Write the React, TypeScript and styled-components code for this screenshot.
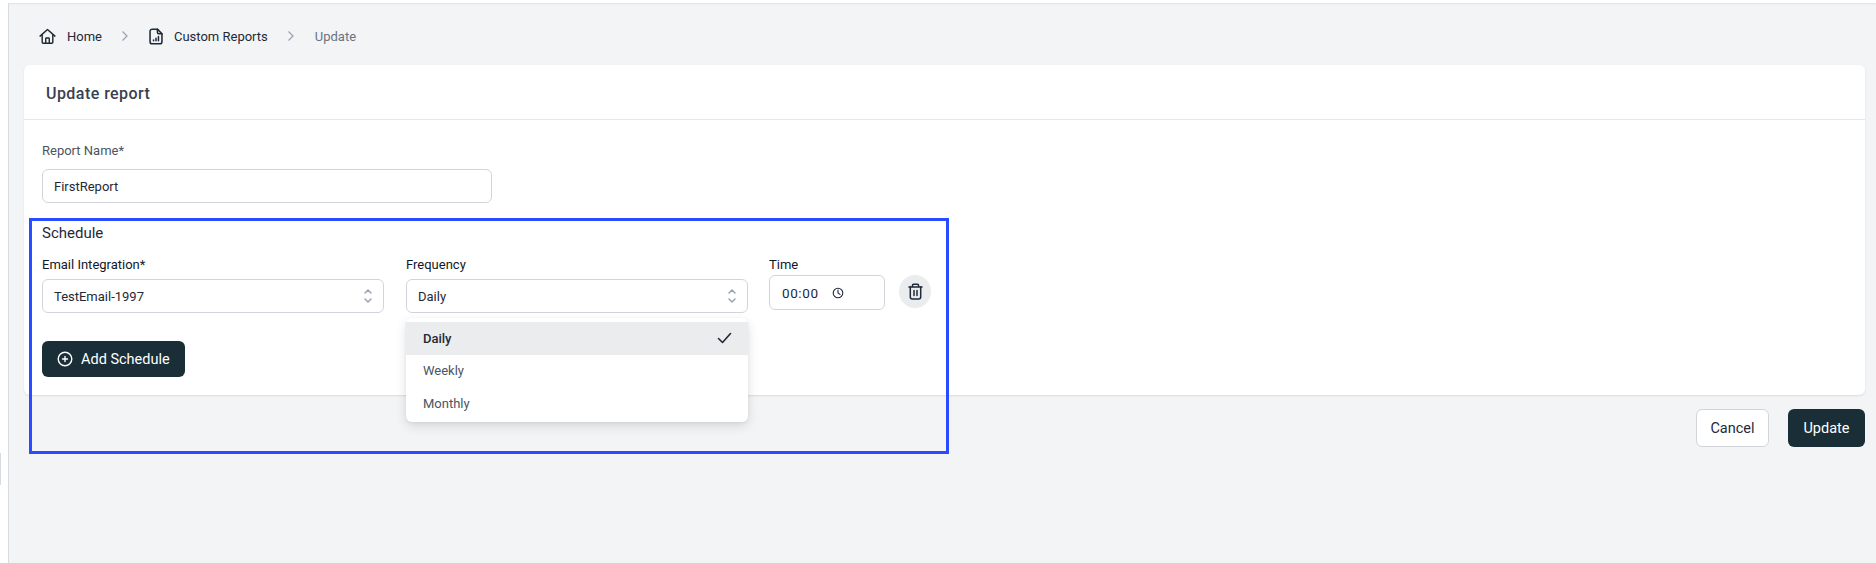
import React from "react";
import styled, { createGlobalStyle } from "styled-components";

const Global = createGlobalStyle`
  html, body { margin: 0; padding: 0; background: #f3f4f6; }
  body { font-family: Roboto, "Noto Sans", sans-serif; overflow: hidden; }
  * { box-sizing: border-box; }
`;

const Page = styled.div`
  width: 1876px;
  height: 563px;
  display: flex;
  flex-direction: column;
  background: #f3f4f6;
  overflow: hidden;
`;
const TopBar = styled.div`
  height: 3px;
  flex: none;
  background: #fff;
  box-shadow: 0 1px 2px rgba(0, 0, 0, 0.08);
`;
const Body = styled.div`
  flex: 1;
  display: flex;
  min-height: 0;
`;
const Rail = styled.div`
  width: 9px;
  flex: none;
  background: #fff;
  border-right: 1px solid #d9dbe0;
  position: relative;
`;
const RailTab = styled.div`
  position: absolute;
  left: 0;
  top: 450px;
  width: 1px;
  height: 32px;
  background: #d9dbe0;
`;
const Main = styled.main`
  flex: 1;
  min-width: 0;
  padding: 0 11px 0 15px;
  position: relative;
`;
const Crumbs = styled.nav`
  height: 62px;
  display: flex;
  align-items: center;
  padding: 4px 0 0 15px;
  font-size: 13px;
  color: #1f2937;
`;
const Crumb = styled.span<{ $muted?: boolean }>`
  display: inline-flex;
  align-items: center;
  gap: 11px;
  color: ${(p) => (p.$muted ? "#6b7280" : "#1f2937")};
`;
const Sep = styled.span`
  display: inline-flex;
  margin: 0 19.5px;
  color: #9ca3af;
`;
const Card = styled.section`
  height: 330px;
  background: #fff;
  border-radius: 6px;
  box-shadow: 0 1px 2px rgba(0, 0, 0, 0.1);
`;
const CardHead = styled.header`
  height: 55px;
  display: flex;
  align-items: center;
  padding: 3px 0 0 22px;
  border-bottom: 1px solid #e5e7eb;
  font-size: 16px;
  font-weight: 500;
  letter-spacing: 0.45px;
  color: #374151;
`;
const CardBody = styled.div`
  padding: 20px 18px 0;
`;
const Label = styled.div<{ $strong?: boolean }>`
  font-size: 13px;
  line-height: 20px;
  padding-top: 1px;
  color: ${(p) => (p.$strong ? "#111827" : "#4b5563")};
`;
const Field = styled.div<{ $w: number; $h?: number }>`
  width: ${(p) => p.$w}px;
  height: ${(p) => p.$h ?? 34}px;
  background: #fff;
  border: 1px solid #d1d5db;
  border-radius: 6px;
  display: flex;
  align-items: center;
  justify-content: space-between;
  padding: 0 10px 0 11px;
  font-size: 13px;
  color: #1f2937;
`;
const NameField = styled(Field)`
  margin-top: 8px;
`;
const Heading = styled.div`
  margin-top: 20px;
  font-size: 15px;
  line-height: 20px;
  color: #1f2937;
`;
const Row = styled.div`
  display: flex;
  margin-top: 11px;
  height: 85px;
`;
const Col = styled.div<{ $w: number }>`
  width: ${(p) => p.$w}px;
  flex: none;
  position: relative;
`;
const SelectField = styled(Field)`
  margin-top: 4px;
`;
const TimeField = styled(Field)`
  justify-content: flex-start;
  gap: 13px;
  padding-left: 12px;
  font-size: 13.5px;
  letter-spacing: 0.6px;
`;
const TrashBtn = styled.button`
  width: 32px;
  height: 33px;
  margin: 21px 0 0 14px;
  padding: 0;
  border: 0;
  border-radius: 50%;
  background: #ebecee;
  display: flex;
  align-items: center;
  justify-content: center;
  color: #1f2937;
`;
const Menu = styled.ul`
  position: absolute;
  top: 64px;
  left: 0;
  width: 342px;
  margin: 0;
  padding: 4px 0 2px;
  list-style: none;
  background: #fff;
  border-radius: 6px;
  box-shadow: 0 4px 12px rgba(0, 0, 0, 0.12), 0 1px 3px rgba(0, 0, 0, 0.06);
  z-index: 2;
`;
const Option = styled.li<{ $active?: boolean }>`
  height: 32.5px;
  display: flex;
  align-items: center;
  justify-content: space-between;
  padding: 0 16px 0 17px;
  font-size: 13px;
  font-weight: ${(p) => (p.$active ? 500 : 400)};
  color: ${(p) => (p.$active ? "#1f2937" : "#4b5563")};
  background: ${(p) => (p.$active ? "#ebecee" : "transparent")};
`;
const Primary = styled.button`
  height: 36px;
  display: inline-flex;
  align-items: center;
  gap: 8px;
  padding: 0 15px;
  border: 0;
  border-radius: 6px;
  background: #1a2e38;
  color: #fff;
  font: inherit;
  font-size: 14.5px;
`;
const AddBtn = styled(Primary)`
  margin-top: 2px;
  width: 143px;
`;
const Actions = styled.div`
  display: flex;
  justify-content: flex-end;
  gap: 19px;
  margin-top: 14px;
`;
const Cancel = styled.button`
  width: 73px;
  height: 38px;
  background: #fff;
  border: 1px solid #d1d5db;
  border-radius: 6px;
  font: inherit;
  font-size: 14.5px;
  color: #1f2937;
`;
const Update = styled(Primary)`
  width: 77px;
  height: 38px;
  justify-content: center;
  padding: 0;
`;
const Highlight = styled.div`
  position: absolute;
  left: 20px;
  top: 215px;
  width: 920px;
  height: 236px;
  border: 3px solid #2a4bff;
  pointer-events: none;
  z-index: 3;
`;

const Chevron = () => (
  <svg width="8" height="12" viewBox="0 0 8 12" fill="none" stroke="currentColor" strokeWidth="1.3">
    <path d="M1.5 1.5 6 6l-4.5 4.5" />
  </svg>
);
const Home = () => (
  <svg width="17" height="17" viewBox="0 0 24 24" fill="none" stroke="#1f2937" strokeWidth="2" strokeLinecap="round" strokeLinejoin="round">
    <path d="M1.5 11.5 12 2l10.5 9.5" />
    <path d="M4.5 9.5V20a1.5 1.5 0 0 0 1.5 1.5h12a1.5 1.5 0 0 0 1.5-1.5V9.5" />
    <path d="M9.5 21.5V15a1 1 0 0 1 1-1h3a1 1 0 0 1 1 1v6.5" />
  </svg>
);
const Doc = () => (
  <svg width="14" height="17" viewBox="0 0 20 24" fill="none" stroke="#1f2937" strokeWidth="2.2" strokeLinecap="round" strokeLinejoin="round">
    <path d="M12 1.5H4.5a3 3 0 0 0-3 3v15a3 3 0 0 0 3 3h11a3 3 0 0 0 3-3V8z" />
    <path d="M12 1.5V6a2 2 0 0 0 2 2h4.5" />
    <path d="M6.5 18v-1M10 18v-3.5M13.5 18v-6" />
  </svg>
);
const Updown = () => (
  <svg width="10" height="16" viewBox="0 0 10 16" fill="none" stroke="#9ca3af" strokeWidth="1.5" strokeLinecap="round" strokeLinejoin="round">
    <path d="M2 5 5 2l3 3M2 11l3 3 3-3" />
  </svg>
);
const Clock = () => (
  <svg width="12" height="12" viewBox="0 0 12 12" fill="none" stroke="#1f2937" strokeWidth="1.1" strokeLinecap="round">
    <circle cx="6" cy="6" r="4.8" />
    <path d="M6 3v3l2 1.4" />
  </svg>
);
const Trash = () => (
  <svg width="15" height="17" viewBox="0 0 15 17" fill="none" stroke="#1f2937" strokeWidth="1.5" strokeLinecap="round" strokeLinejoin="round">
    <path d="M1 4h13M4.5 4V2.3a1 1 0 0 1 1-1h4a1 1 0 0 1 1 1V4" />
    <path d="M2.3 4v10a2 2 0 0 0 2 2h6.4a2 2 0 0 0 2-2V4" />
    <path d="M6 7.5v5M9 7.5v5" />
  </svg>
);
const Check = () => (
  <svg width="15" height="12" viewBox="0 0 15 12" fill="none" stroke="#1f2937" strokeWidth="1.6" strokeLinecap="round" strokeLinejoin="round">
    <path d="M1.5 6.5 5.5 10.5 13.5 1.5" />
  </svg>
);
const PlusCircle = () => (
  <svg width="16" height="16" viewBox="0 0 16 16" fill="none" stroke="#fff" strokeWidth="1.4" strokeLinecap="round">
    <circle cx="8" cy="8" r="6.8" />
    <path d="M8 5.5v5M5.5 8h5" />
  </svg>
);

export default function App() {
  return (
    <Page>
      <Global />
      <TopBar />
      <Body>
        <Rail>
          <RailTab />
        </Rail>
        <Main>
          <Crumbs>
            <Crumb>
              <Home />
              Home
            </Crumb>
            <Sep>
              <Chevron />
            </Sep>
            <Crumb>
              <Doc />
              Custom Reports
            </Crumb>
            <Sep>
              <Chevron />
            </Sep>
            <Crumb $muted>Update</Crumb>
          </Crumbs>
          <Card>
            <CardHead>Update report</CardHead>
            <CardBody>
              <Label>Report Name*</Label>
              <NameField $w={450}>FirstReport</NameField>
              <Heading>Schedule</Heading>
              <Row>
                <Col $w={364}>
                  <Label $strong>Email Integration*</Label>
                  <SelectField $w={342}>
                    TestEmail-1997
                    <Updown />
                  </SelectField>
                </Col>
                <Col $w={363}>
                  <Label $strong>Frequency</Label>
                  <SelectField $w={342}>
                    Daily
                    <Updown />
                  </SelectField>
                  <Menu>
                    <Option $active>
                      Daily
                      <Check />
                    </Option>
                    <Option>Weekly</Option>
                    <Option>Monthly</Option>
                  </Menu>
                </Col>
                <Col $w={116}>
                  <Label $strong>Time</Label>
                  <TimeField $w={116} $h={35}>
                    00:00
                    <Clock />
                  </TimeField>
                </Col>
                <TrashBtn>
                  <Trash />
                </TrashBtn>
              </Row>
              <AddBtn>
                <PlusCircle />
                Add Schedule
              </AddBtn>
            </CardBody>
          </Card>
          <Actions>
            <Cancel>Cancel</Cancel>
            <Update>Update</Update>
          </Actions>
          <Highlight />
        </Main>
      </Body>
    </Page>
  );
}
